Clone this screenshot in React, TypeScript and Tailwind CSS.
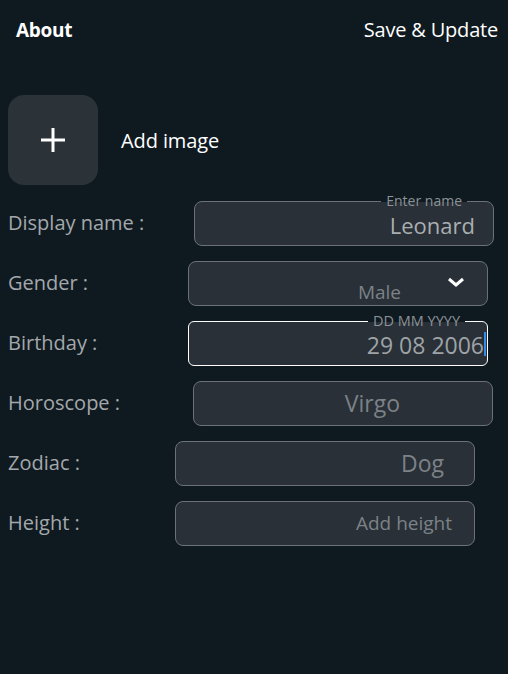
import React from "react";

const Field: React.FC<{
  label: string;
  gap: string;
  children: React.ReactNode;
}> = ({ label, gap, children }) => (
  <div className="flex items-center h-[60px]">
    <div className={`${gap} shrink-0 text-[20px] text-[#a3a8ac]`}>{label}</div>
    {children}
  </div>
);

const boxCls =
  "relative w-[300px] h-[45px] rounded-[8px] border-[1.5px] border-[#6b7177] bg-[#293037] flex items-center justify-end";

const App: React.FC = () => {
  return (
    <div
      className="w-[508px] h-[674px] bg-[#0f1a20] text-white overflow-hidden"
      style={{ fontFamily: '"Open Sans", "Noto Sans", sans-serif' }}
    >
      {/* Header */}
      <div className="flex justify-between items-center h-[60px] pl-4 pr-[10px]">
        <span className="text-[19px] font-bold tracking-[-0.3px]">About</span>
        <span className="text-[20px] tracking-[-0.2px]">Save &amp; Update</span>
      </div>

      {/* Image */}
      <div className="flex items-center gap-[23px] pl-2 pt-[35px]">
        <div className="w-[90px] h-[90px] rounded-[16px] bg-[#2b3238] flex items-center justify-center">
          <svg width="28" height="28" viewBox="0 0 28 28">
            <path d="M14 2v24M2 14h24" stroke="white" strokeWidth="3" />
          </svg>
        </div>
        <span className="text-[20px] tracking-[-0.1px] mt-[2px]">Add image</span>
      </div>

      {/* Form */}
      <div className="pl-2 mt-[8px]">
        <Field label="Display name :" gap="w-[186px]">
          <div className={`${boxCls} pr-[18px]`}>
            <span className="absolute -top-[11px] right-[26px] px-[5px] text-[14px] text-[#8c9297] leading-[20px] bg-[linear-gradient(to_bottom,#0f1a20_55%,#293037_55%)]">
              Enter name
            </span>
            <span className="text-[22px] text-[#a9aeb2] mt-[4px]">Leonard</span>
          </div>
        </Field>
        <Field label="Gender :" gap="w-[180px]">
          <div className={`${boxCls} pr-[86px]`}>
            <span className="text-[19px] text-[#7c8287] mt-[18px]">Male</span>
            <svg
              className="absolute right-[22px] top-[14px]"
              width="18"
              height="12"
              viewBox="0 0 18 12"
            >
              <path d="M2 3l7 6 7-6" stroke="white" strokeWidth="3" fill="none" />
            </svg>
          </div>
        </Field>
        <Field label="Birthday :" gap="w-[180px]">
          <div className="relative w-[300px] h-[45px] rounded-[6px] border-[1.5px] border-white bg-[#293037] flex items-center justify-end pr-[3px]">
            <span className="absolute -top-[11px] right-[22px] px-[5px] text-[14.5px] text-[#8c9297] leading-[20px] bg-[linear-gradient(to_bottom,#0f1a20_55%,#293037_55%)]">
              DD MM YYYY
            </span>
            <span className="text-[23px] text-[#9ea3a7] mt-[4px]">29 08 2006</span>
            <span className="absolute right-[1px] top-[10px] w-[2px] h-[24px] bg-[#2f8cf0]" />
          </div>
        </Field>
        <Field label="Horoscope :" gap="w-[185px]">
          <div className={`${boxCls} pr-[92px]`}>
            <span className="text-[23px] text-[#7c8287]">Virgo</span>
          </div>
        </Field>
        <Field label="Zodiac :" gap="w-[167px]">
          <div className={`${boxCls} pr-[30px]`}>
            <span className="text-[23px] text-[#7c8287]">Dog</span>
          </div>
        </Field>
        <Field label="Height :" gap="w-[167px]">
          <div className={`${boxCls} pr-[22px]`}>
            <span className="text-[19px] text-[#7c8287]">Add height</span>
          </div>
        </Field>
      </div>
    </div>
  );
};

export default App;
